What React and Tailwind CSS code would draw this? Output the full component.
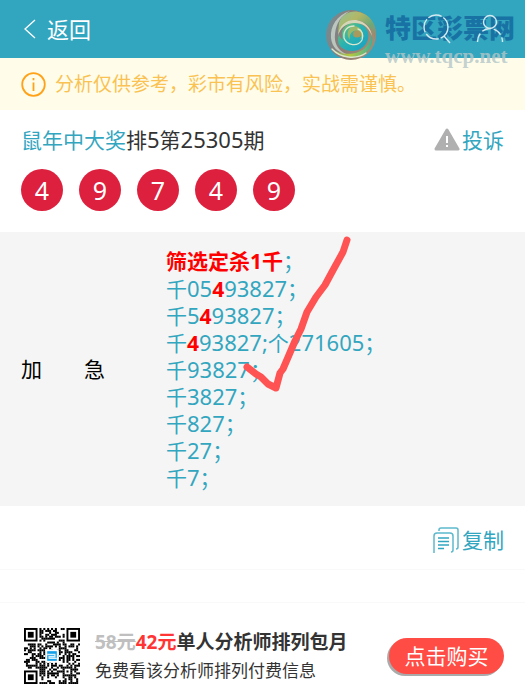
import React from 'react';

const balls = [4, 9, 7, 4, 9];

// b = bold red hit, n = normal digits, t = chinese text
const lines = [
  [['b', '筛选定杀1千'], ['t', '；']],
  [['t', '千'], ['n', '05'], ['b', '4'], ['n', '93827'], ['t', '；']],
  [['t', '千'], ['n', '5'], ['b', '4'], ['n', '93827'], ['t', '；']],
  [['t', '千'], ['b', '4'], ['n', '93827;'], ['t', '个'], ['n', '271605'], ['t', '；']],
  [['t', '千'], ['n', '93827'], ['t', '；']],
  [['t', '千'], ['n', '3827'], ['t', '；']],
  [['t', '千'], ['n', '827'], ['t', '；']],
  [['t', '千'], ['n', '27'], ['t', '；']],
  [['t', '千'], ['n', '7'], ['t', '；']],
];

const partClass = {
  t: '',
  n: 'text-[22px]',
  b: 'font-bold text-[#ff0000]',
};

const QR_SIZE = 29;

const inFinder = (x, y) =>
  (x < 8 && y < 8) || (x > QR_SIZE - 9 && y < 8) || (x < 8 && y > QR_SIZE - 9);

function qrModules() {
  const cells = [];
  let seed = 25305;
  for (let y = 0; y < QR_SIZE; y++) {
    for (let x = 0; x < QR_SIZE; x++) {
      seed = (seed * 1103515245 + 12345) % 2147483648;
      if (inFinder(x, y)) continue;
      if (x >= 20 && x <= 24 && y >= 20 && y <= 24) {
        const d = Math.max(Math.abs(x - 22), Math.abs(y - 22));
        if (d !== 1) cells.push([x, y]);
        continue;
      }
      if (seed / 2147483648 < 0.52) cells.push([x, y]);
    }
  }
  return cells;
}

function QrCode() {
  return (
    <svg viewBox="0 0 29 29" className="h-14 w-14 shrink-0" role="img" aria-label="二维码">
      {qrModules().map(([x, y]) => (
        <rect key={`${x}-${y}`} x={x} y={y} width="1.05" height="1.05" fill="#000" />
      ))}
      {[[0, 0], [22, 0], [0, 22]].map(([x, y]) => (
        <g key={`${x}-${y}`}>
          <rect x={x} y={y} width="7" height="7" fill="#000" />
          <rect x={x + 1} y={y + 1} width="5" height="5" fill="#fff" />
          <rect x={x + 2} y={y + 2} width="3" height="3" fill="#000" />
        </g>
      ))}
      <rect x="11" y="11" width="7" height="7" fill="#fff" />
      <rect x="12" y="12" width="5" height="5" fill="#109fe8" />
      <path d="M12 13.7h4v1.2h-3v.8h4" fill="none" stroke="#d5effc" strokeWidth=".7" />
    </svg>
  );
}

function SwirlLogo() {
  return (
    <svg viewBox="0 0 52 52" className="h-[52px] w-[52px]" aria-hidden="true">
      <defs>
        <linearGradient id="base" x1="0" y1="0" x2="1" y2=".3">
          <stop offset="0" stopColor="#6f8f98" />
          <stop offset=".5" stopColor="#8c7c78" />
          <stop offset="1" stopColor="#a58a72" />
        </linearGradient>
        <linearGradient id="top" x1="0" y1="0" x2="1" y2=".8">
          <stop offset="0" stopColor="#8fc59a" />
          <stop offset=".4" stopColor="#b3b765" />
          <stop offset=".75" stopColor="#6da878" />
          <stop offset="1" stopColor="#9a8a70" />
        </linearGradient>
        <linearGradient id="bottom" x1="0" y1="0" x2="1" y2="0">
          <stop offset="0" stopColor="#7f9a80" />
          <stop offset=".45" stopColor="#b5c93c" />
          <stop offset="1" stopColor="#3fae9a" />
        </linearGradient>
        <linearGradient id="core" x1="0" y1="0" x2="1" y2="1">
          <stop offset="0" stopColor="#86c45a" />
          <stop offset=".45" stopColor="#2bb3b0" />
          <stop offset="1" stopColor="#149fc8" />
        </linearGradient>
      </defs>
      <circle cx="25" cy="26" r="25" fill="url(#base)" />
      <path d="M13 14C16 4 27 0 36 4 47 8 52 19 49 31 47 17 37 10 27 11 20 12 15 17 12 25Z" fill="url(#top)" />
      <path d="M6 40C15 46 30 47 39 39 44 34 46 28 45 23 49 34 44 44 33 47 23 50 12 48 6 40Z" fill="url(#bottom)" />
      <path d="M17 31C13 20 21 13 30 14 41 15 45 25 41 33 36 43 24 44 16 39 12 36 11 31 13 26 14 28 15 30 17 31Z" fill="url(#core)" />
      <path d="M24 31C20 26 21 19 28 17 36 17 39 26 34 31 37 25 33 21 28 22 25 23 23 26 24 31Z" fill="#9bb86a" />
      <ellipse cx="31" cy="25" rx="4" ry="3.500" fill="#a79a5c" />
      <path d="M24 2C11 6 4 17 5 29 6 38 12 44 20 45 11 41 8 33 9 25 10 14 15 7 24 2Z" fill="#cfdcd0" opacity=".75" />
      <path d="M12 27C13 16 21 10 30 11 39 12 45 19 46 27 42 17 36 14 29 14 20 14 14 19 12 27Z" fill="#e1e5c4" opacity=".85" />
      <path d="M18 29C17 21 22 17 28 17M18 29C21 37 32 38 36 31 38 26 36 21 32 20M6 40C14 49 30 51 40 44" fill="none" stroke="#dbe7cd" strokeWidth="1.300" strokeLinecap="round" />
    </svg>
  );
}

function Watermark() {
  return (
    <div className="pointer-events-none absolute top-[9px] right-[10px] flex gap-[7px]">
      <SwirlLogo />
      <div className="flex flex-col">
        <span className="text-[26px] leading-[38px] font-black text-[#1873a4]">特区彩票网</span>
        <span className="font-['Liberation_Serif'] text-[21px] leading-[18px] font-bold text-[#b4c6c8]/80">
          www.tqcp.net
        </span>
      </div>
    </div>
  );
}

function Header() {
  return (
    <header className="relative z-10 flex h-[58px] items-center justify-between bg-[#33a6bf] px-[21px] text-white">
      <button type="button" className="flex items-center gap-2 text-[22px] leading-[30px]">
        <svg viewBox="0 0 18 20" className="h-5 w-[18px]" fill="none" stroke="currentColor" strokeWidth="1.3" aria-hidden="true">
          <path d="M14 1 4 10l10 9" />
        </svg>
        返回
      </button>
      <Watermark />
      <div className="relative flex items-center gap-6">
        <button type="button" aria-label="搜索">
          <svg viewBox="0 0 30 30" className="h-[30px] w-[30px]" fill="none" stroke="#d4eaf1" strokeWidth="1.4" aria-hidden="true">
            <circle cx="14" cy="13" r="12" strokeDasharray="14 2" />
            <path d="m22 22 6 7" />
          </svg>
        </button>
        <button type="button" aria-label="我的">
          <svg viewBox="0 0 28 30" className="h-[30px] w-7" fill="none" stroke="#d4eaf1" strokeWidth="1.4" aria-hidden="true">
            <circle cx="14" cy="8" r="6.5" />
            <path d="M1.500 28c0-7 5-13.500 12.500-13.500S26.500 21 26.500 28" strokeDasharray="9 3" />
          </svg>
        </button>
      </div>
    </header>
  );
}

export default function App() {
  return (
    <div className="w-full bg-white font-['Noto_Sans','Noto_Sans_CJK_SC',sans-serif] text-[21px] text-[#333333]">
      <Header />

      {/* Risk notice */}
      <div className="flex h-[52px] items-center gap-[9px] bg-[#fffdea] px-[21px] text-[19px] leading-[28px] text-[#f9c253]">
        <svg viewBox="0 0 25 25" className="h-[25px] w-[25px]" fill="none" stroke="#ffa21a" strokeWidth="1.8" aria-hidden="true">
          <circle cx="12.500" cy="12.500" r="11.300" />
          <path d="M12.500 10.500v8.500M12.500 6v2.200" />
        </svg>
        <p>分析仅供参考，彩市有风险，实战需谨慎。</p>
      </div>

      {/* Title and draw result */}
      <section className="px-[21px] pt-[15px] pb-[21px]">
        <div className="flex items-center justify-between leading-[28px]">
          <h1>
            <a href="#analyst" className="text-[#33a6bf]">鼠年中大奖</a>
            排<span className="text-[22px]">5</span>第<span className="text-[22px]">25305</span>期
          </h1>
          <a href="#report" className="flex items-center gap-[2px] text-[#33a6bf]">
            <svg viewBox="0 0 26 23" className="h-[23px] w-[26px]" aria-hidden="true">
              <path d="M13 2 24 21H2Z" fill="#b0b0b0" stroke="#b0b0b0" strokeWidth="3" strokeLinejoin="round" />
              <path d="M13 8v7M13 17v2" stroke="#fff" strokeWidth="2" />
            </svg>
            投诉
          </a>
        </div>
        <ul className="mt-[15px] flex gap-4">
          {balls.map((n, i) => (
            <li key={i} className="flex h-[42px] w-[42px] items-center justify-center rounded-full bg-[#dc203e] text-[25px] leading-[28px] text-white">
              {n}
            </li>
          ))}
        </ul>
      </section>

      {/* Picks */}
      <section className="relative flex items-center bg-[#f5f5f5] px-[21px] pt-4 pb-[15px]">
        <h2 className="w-[145px] shrink-0 leading-[27px] text-black">加　　急</h2>
        <div className="text-[#33a6bf]">
          {lines.map((parts, i) => (
            <p key={i} className="flex h-[27px] items-baseline leading-[27px]">
              {parts.map(([type, text], j) => (
                <span key={j} className={partClass[type]}>{text}</span>
              ))}
            </p>
          ))}
        </div>
        <svg viewBox="0 0 110 160" className="pointer-events-none absolute top-[3px] left-[241px] h-[160px] w-[110px]" fill="none" stroke="#ff5252" strokeWidth="7" strokeLinecap="round" strokeLinejoin="round" aria-hidden="true">
          <path d="M106 5 102 17 91 37 84 50 75 62 66 77 60 94 54 106 48 120 42 134 39 138 35 153 27 149 20 142 15 139 6 132" />
        </svg>
      </section>

      <div className="flex h-16 items-center justify-end border-b border-[#f9f9f9] px-[21px] pt-[5px]">
        <button type="button" className="flex items-center gap-[3px] leading-[28px] text-[#33a6bf]">
          <svg viewBox="0 0 26 26" className="h-[26px] w-[26px]" fill="none" stroke="currentColor" strokeWidth="1.5" aria-hidden="true">
            <path d="M6 4V3q0-2 2-2h15q2 0 2 2v17q0 2-2 2" opacity=".8" />
            <path d="M1 26V9q0-3 3-3h13q3 0 3 3v14q0 2-2 2" opacity=".8" />
            <path d="M5 11h11M5 14.500h11M5 18h11M5 21.500h6" />
          </svg>
          复制
        </button>
      </div>
      <div className="h-[33px] border-b border-[#f9f9f9]" />

      {/* Monthly offer */}
      <footer className="flex items-center px-[21px] pt-6">
        <div className="flex grow items-center gap-[15px] pl-[3px]">
          <QrCode />
          <div>
            <p className="text-[19px] leading-[30px] font-bold">
              <del className="text-[#bfbfbf]">58元</del>
              <span className="text-[#ff3434]">42元</span>
              单人分析师排列包月
            </p>
            <p className="text-[17px] leading-[28px]">免费看该分析师排列付费信息</p>
          </div>
        </div>
        <button type="button" className="h-9 w-[115px] shrink-0 rounded-full bg-[#ff4c45] leading-[36px] text-white shadow-[-2px_2px_0_#aaaaaa]">
          点击购买
        </button>
      </footer>
    </div>
  );
}
